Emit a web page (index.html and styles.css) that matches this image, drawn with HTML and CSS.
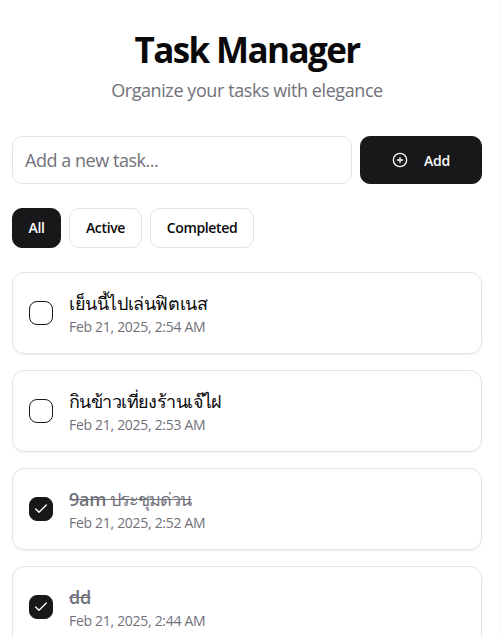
FILE: index.html
```html
<!DOCTYPE html>
<html lang="en">
<head>
<meta charset="utf-8">
<title>Task Manager</title>
<link rel="stylesheet" href="styles.css">
</head>
<body>
<main class="app">
  <header class="header">
    <h1 class="title">Task Manager</h1>
    <p class="subtitle">Organize your tasks with elegance</p>
  </header>
  <form class="add-form">
    <input class="add-input" type="text" placeholder="Add a new task...">
    <button class="button primary add-button" type="button">
      <svg class="plus" viewBox="0 0 24 24"><circle cx="12" cy="12" r="10"/><path d="M8 12h8M12 8v8"/></svg>
      <span>Add</span>
    </button>
  </form>
  <nav class="filters">
    <button class="button primary all">All</button>
    <button class="button active">Active</button>
    <button class="button completed">Completed</button>
  </nav>
  <ul class="tasks">
    <li class="task">
      <span class="check"></span>
      <div><p class="name">เย็นนี้ไปเล่นฟิตเนส</p><p class="date">Feb 21, 2025, 2:54 AM</p></div>
    </li>
    <li class="task">
      <span class="check"></span>
      <div><p class="name tight">กินข้าวเที่ยงร้านเจ๊ไฝ</p><p class="date">Feb 21, 2025, 2:53 AM</p></div>
    </li>
    <li class="task done">
      <span class="check"><svg viewBox="0 0 24 24"><path d="M20 6 9 17l-5-5"/></svg></span>
      <div><p class="name mixed"><span class="latin">9am</span> ประชุมด่วน</p><p class="date">Feb 21, 2025, 2:52 AM</p></div>
    </li>
    <li class="task done">
      <span class="check"><svg viewBox="0 0 24 24"><path d="M20 6 9 17l-5-5"/></svg></span>
      <div><p class="name latin">dd</p><p class="date">Feb 21, 2025, 2:44 AM</p></div>
    </li>
  </ul>
</main>
</body>
</html>
```
FILE: styles.css
```css
* { box-sizing: border-box; }
html { height: 100%; overflow: hidden; }
body {
  margin: 0;
  height: 100%;
  overflow: hidden;
  border-right: 1px solid #fafafa;
  background: #fff;
  color: #09090b;
  font-family: "Open Sans", "Noto Sans", sans-serif;
}
h1, p, ul { margin: 0; padding: 0; }
.app { width: 494px; padding: 31px 12px; }
.header { text-align: center; margin-bottom: 32px; }
.title { font-size: 35px; line-height: 38px; padding-bottom: 2px; font-weight: 700; letter-spacing: -1.6px; }
.subtitle { margin-top: 5px; font-size: 18px; line-height: 28px; letter-spacing: -0.42px; color: #71717a; }
.add-form { display: flex; gap: 8px; margin-bottom: 24px; }
.add-input {
  flex: 1; min-width: 0; height: 48px; padding: 0 12px;
  border: 1px solid #e4e4e7; border-radius: 10px; background: #fff;
  font: 18px "Open Sans", "Noto Sans", sans-serif;
  letter-spacing: -0.46px;
}
.add-input::placeholder { color: #71717a; opacity: 1; }
.button {
  display: flex; align-items: center; justify-content: center;
  height: 40px; padding: 0 0 1px; border: 1px solid #e4e4e7; border-radius: 10px;
  background: #fff; color: #09090b;
  font: 600 14px "Open Sans", "Noto Sans", sans-serif;
  letter-spacing: -0.35px;
}
.primary { background: #18181b; border-color: #18181b; color: #fafafa; }
.add-button { width: 122px; height: 48px; gap: 16px; padding: 0; letter-spacing: -0.2px; }
.plus { width: 16px; height: 16px; }
svg { fill: none; stroke: currentColor; stroke-width: 2; stroke-linecap: round; stroke-linejoin: round; }
.filters { display: flex; gap: 8px; margin-bottom: 24px; }
.all { width: 49px; }
.active { width: 73px; }
.completed { width: 104px; }
.tasks { display: flex; flex-direction: column; gap: 16px; list-style: none; }
.task {
  display: flex; align-items: center; gap: 16px; height: 82px; padding: 0 16px;
  border: 1px solid #e4e4e7; border-radius: 12px; box-shadow: 0 1px 2px rgba(0,0,0,.06);
}
.check {
  display: flex; align-items: center; justify-content: center;
  width: 24px; height: 24px; border: 1px solid #18181b; border-radius: 8px; color: #fff;
}
.check svg { width: 16px; height: 16px; }
.name { font-size: 18px; line-height: 28px; font-weight: 500; letter-spacing: -0.4px; }
.tight { letter-spacing: -0.57px; }
.mixed { letter-spacing: -0.9px; }
.latin { font-weight: 600; letter-spacing: -0.3px; }
.date { font-size: 14px; line-height: 20px; letter-spacing: -0.3px; color: #71717a; }
.done .check { background: #18181b; }
.done .name { color: #71717a; text-decoration: line-through; }
```
